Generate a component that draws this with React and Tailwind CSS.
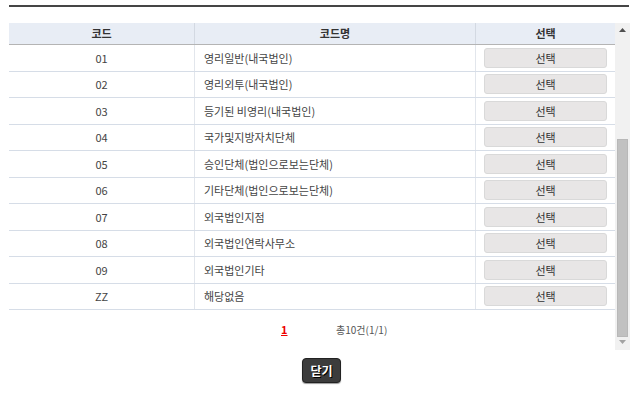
import React from "react";

const rows = [
  ["01", "영리일반(내국법인)"],
  ["02", "영리외투(내국법인)"],
  ["03", "등기된 비영리(내국법인)"],
  ["04", "국가및지방자치단체"],
  ["05", "승인단체(법인으로보는단체)"],
  ["06", "기타단체(법인으로보는단체)"],
  ["07", "외국법인지점"],
  ["08", "외국법인연락사무소"],
  ["09", "외국법인기타"],
  ["ZZ", "해당없음"],
];

export default function App() {
  return (
    <div
      className="w-[644px] h-[401px] bg-white text-[11px] text-[#444]"
      style={{ fontFamily: '"Noto Sans CJK KR", "Noto Sans", sans-serif' }}
    >
      <div className="pt-[5px] pl-[9px]">
        <div className="w-[620px] h-[2px] bg-[#454545]" />
        <div className="mt-[16px] flex">
          <div className="w-[606px] flex flex-col">
            <div className="flex h-[22px] bg-[#e8edf5] border-b border-[#b4b4b4] font-bold text-[#333]">
              <div className="w-[186px] flex items-center justify-center border-r border-[#d3d9e2]">코드</div>
              <div className="w-[281px] flex items-center justify-center border-r border-[#d3d9e2]">코드명</div>
              <div className="flex-1 flex items-center justify-center">선택</div>
            </div>
            {rows.map(([c, n]) => (
              <div key={c} className="flex h-[26.5px] border-b border-[#d6dde7]">
                <div className="w-[186px] flex items-center justify-center border-r border-[#e2e6ec]">{c}</div>
                <div className="w-[281px] flex items-center pl-[9px] border-r border-[#e2e6ec]">{n}</div>
                <div className="flex-1 flex items-center justify-center">
                  <div className="w-[123px] h-[20px] rounded-[3px] bg-[#e8e6e6] border border-[#d9d9d9] flex items-center justify-center text-[#333]">
                    선택
                  </div>
                </div>
              </div>
            ))}
            <div className="flex items-center h-[39px] pl-[272px]">
              <span className="text-[#e00] font-bold underline w-[10px]">1</span>
              <span className="ml-[45px] text-[10px] text-[#555]">총10건(1/1)</span>
            </div>
          </div>
          <div className="w-[15px] h-[327px] bg-[#f1f1f1] flex flex-col items-center">
            <svg width="15" height="15" viewBox="0 0 15 15">
              <path d="M4 9 L7.5 5 L11 9 Z" fill="#505050" />
            </svg>
            <div className="mt-[101px] w-[11px] h-[198px] bg-[#c1c1c1] border border-[#b8b8b8]" />
            <svg width="15" height="13" viewBox="0 0 15 13">
              <path d="M4 3 L7.5 7 L11 3 Z" fill="#a3a3a3" />
            </svg>
          </div>
        </div>
        <div className="w-[621px] flex justify-center mt-[8px]">
          <div className="ml-[4px] w-[39px] h-[25px] rounded-[4px] bg-[#3c3c3c] border border-[#222] shadow-[0_1px_1px_rgba(0,0,0,0.4)] flex items-center justify-center text-white font-bold text-[12px] [text-shadow:1px_1px_0_#000]">
            닫기
          </div>
        </div>
      </div>
    </div>
  );
}
